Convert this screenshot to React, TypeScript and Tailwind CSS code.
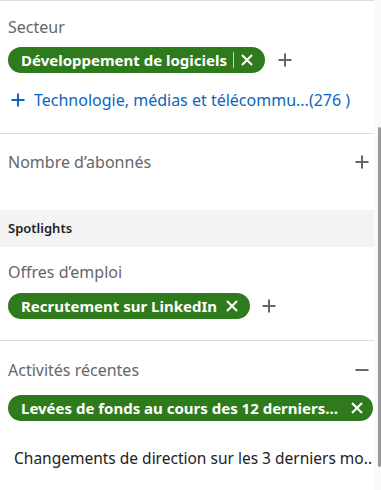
import React from "react";

const F = { fontFamily: '"Noto Sans", "Open Sans", sans-serif' };

function Plus({ className = "" }: { className?: string }) {
  return (
    <svg width="16" height="16" viewBox="0 0 16 16" className={className}>
      <path d="M8 1.5v13M1.5 8h13" stroke="currentColor" strokeWidth="2" strokeLinecap="butt" />
    </svg>
  );
}
function Minus({ className = "" }: { className?: string }) {
  return (
    <svg width="16" height="16" viewBox="0 0 16 16" className={className}>
      <path d="M1.5 8h13" stroke="currentColor" strokeWidth="2" />
    </svg>
  );
}
function X() {
  return (
    <svg width="14" height="14" viewBox="0 0 14 14">
      <path d="M2 2l10 10M12 2L2 12" stroke="white" strokeWidth="2" />
    </svg>
  );
}

export default function App() {
  return (
    <div className="relative w-[381px] h-[490px] overflow-hidden bg-[#fafafa]" style={F}>
      <div className="w-[374px] h-full bg-white border-t border-[#dcdcdc]">
        {/* Secteur */}
        <div className="px-2 pt-[16px] pb-[23px] border-b border-[#dcdcdc]">
          <div className="text-[16px] leading-5 text-[#666]">Secteur</div>
          <div className="mt-[10px] flex items-center gap-3">
            <div className="h-[26px] rounded-full bg-[#2f7a1c] pl-[13px] pr-[11px] flex items-center text-white text-[15px] font-bold">
              <span>Développement de logiciels</span>
              <span className="mx-[6px] w-px h-[16px] bg-white/70" />
              <X />
            </div>
            <Plus className="text-[#666]" />
          </div>
          <div className="mt-[17px] flex items-center gap-[8px] text-[#0a66c2] leading-5">
            <Plus className="ml-[2px]" />
            <span className="text-[16px]">Technologie, médias et télécommu...(276 )</span>
          </div>
        </div>
        {/* Nombre */}
        <div className="pl-2 pr-1 pt-[18px] pb-[38px] flex items-center justify-between">
          <div className="text-[16px] leading-5 text-[#666]">Nombre d’abonnés</div>
          <Plus className="text-[#666]" />
        </div>
        <div className="h-[37px] bg-[#f3f3f3] px-2 flex items-center text-[13px] font-semibold text-[#222]">
          Spotlights
        </div>
        {/* Offres */}
        <div className="px-2 pt-[15px] pb-[21px] border-b border-[#dcdcdc]">
          <div className="text-[16px] leading-5 text-[#666]">Offres d’emploi</div>
          <div className="mt-[11px] flex items-center gap-[11px]">
            <div className="h-[26px] rounded-full bg-[#2f7a1c] pl-[13px] pr-[11px] flex items-center gap-[8px] text-white text-[15px] font-bold">
              <span>Recrutement sur LinkedIn</span>
              <X />
            </div>
            <Plus className="text-[#666]" />
          </div>
        </div>
        {/* Activités */}
        <div className="pl-2 pr-[1px] pt-[19px]">
          <div className="flex items-center justify-between pr-[3px]">
            <div className="text-[16px] leading-5 text-[#666]">Activités récentes</div>
            <Minus className="text-[#666]" />
          </div>
          <div className="mt-[15px] h-[26px] rounded-full bg-[#2f7a1c] pl-[13px] pr-[9px] flex items-center justify-between text-white text-[15px] font-bold">
            <span>Levées de fonds au cours des 12 derniers...</span>
            <X />
          </div>
          <div className="mt-[27px] pl-[6px] text-[15.5px] leading-5 text-[#222] whitespace-nowrap">
            Changements de direction sur les 3 derniers mo..
          </div>
        </div>
      </div>
      <div className="absolute right-0 top-[127px] w-[3px] h-[340px] bg-[#9a9a9a] rounded-sm" />
    </div>
  );
}
